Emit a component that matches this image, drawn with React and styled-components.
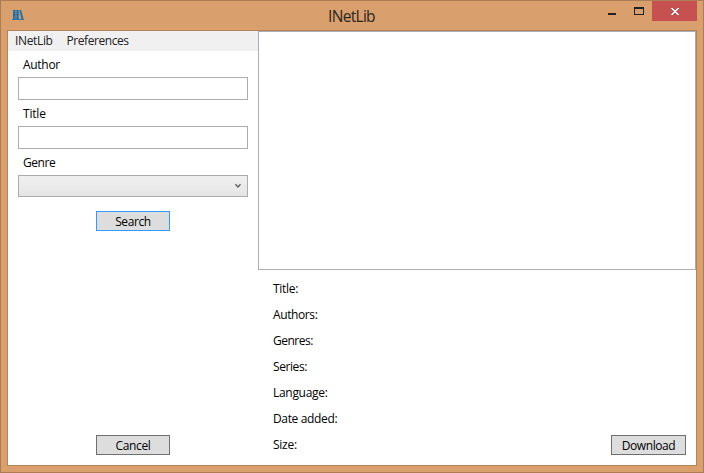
import React from "react";
import styled, { createGlobalStyle } from "styled-components";

const Global = createGlobalStyle`
  *, *::before, *::after { box-sizing: border-box; }
  body { margin: 0; overflow: hidden; }
  button, input { font: inherit; }
`;

const Window = styled.div`
  width: 704px;
  height: 473px;
  display: flex;
  flex-direction: column;
  padding: 0 6px 6px;
  border: 1px solid #ad7e56;
  background: #d99f6c;
  color: #000;
  font: 12px/16px "Open Sans", "Noto Sans", sans-serif;
`;

const TitleBar = styled.header`
  height: 29px;
  flex: none;
  display: grid;
  grid-template-columns: 97px 1fr 97px;
`;

const AppIcon = styled.svg`
  margin: 8px 0 0 5px;
`;

const Caption = styled.h1`
  margin: 0;
  padding: 5px 1px 0 0;
  text-align: center;
  font-size: 15.5px;
  font-weight: 400;
  line-height: 20px;
  letter-spacing: -0.7px;
  color: #2b2623;
`;

const WindowControls = styled.div`
  display: flex;
  justify-content: flex-end;
`;

const ControlButton = styled.button`
  width: ${(p) => p.$width}px;
  height: 20px;
  padding: 0;
  border: 0;
  background: ${(p) => (p.$close ? "#c75050" : "transparent")};
  svg { display: block; }
`;

const Client = styled.main`
  flex: 1;
  min-height: 0;
  display: grid;
  grid-template-columns: 250px 438px;
  grid-template-rows: minmax(0, 1fr);
  border: 1px solid #b68358;
  background: #fff;
`;

const SearchPane = styled.section`
  display: flex;
  flex-direction: column;
`;

const MenuBar = styled.nav`
  height: 20px;
  display: flex;
  gap: 14px;
  padding: 2px 7px 0;
  background: #f0f0f0;
  color: #212121;
`;

const Text = styled.span`
  white-space: nowrap;
  letter-spacing: ${(p) => p.$track ?? -0.45}px;
`;

const SearchForm = styled.div`
  flex: 1;
  display: flex;
  flex-direction: column;
  padding: 0 10px 10px;
`;

const Field = styled.label`
  display: flex;
  flex-direction: column;
  height: 49px;
`;

const FieldLabel = styled(Text)`
  height: 26px;
  padding: 6px 0 0 5px;
`;

const TextBox = styled.input`
  height: 23px;
  padding: 0 4px;
  border: 1px solid #abadb3;
  border-radius: 0;
  background: #fff;
  outline: 0;
`;

const ComboBox = styled.div`
  height: 22px;
  flex: none;
  display: flex;
  align-items: center;
  justify-content: flex-end;
  padding: 0 5px 1px 0;
  border: 1px solid #acacac;
  background: linear-gradient(#f0f0f0, #e5e5e5);
`;

const PushButton = styled.button`
  width: ${(p) => p.$width ?? 74}px;
  height: 20px;
  padding: 1px 0 0;
  border: 1px solid ${(p) => (p.$default ? "#3399ff" : "#707070")};
  background: #ddd;
  color: #000;
  line-height: 17px;
`;

const Actions = styled.div`
  flex: 1;
  display: flex;
  flex-direction: column;
  align-items: center;
  justify-content: space-between;
  padding: 14px 0 0;
`;

const BookPane = styled.section`
  display: flex;
  flex-direction: column;
`;

const BookList = styled.div`
  height: 239px;
  flex: none;
  border: 1px solid #abadb3;
`;

const Details = styled.div`
  flex: 1;
  min-height: 0;
  display: flex;
  justify-content: space-between;
  align-items: flex-end;
  padding: 0 10px 10px 15px;
`;

const DetailList = styled.div`
  align-self: flex-start;
  display: grid;
  grid-auto-rows: 26px;
  padding-top: 11px;
`;

const DETAILS = [
  ["Title:", -0.3],
  ["Authors:", -0.4],
  ["Genres:", -0.5],
  ["Series:", -0.42],
  ["Language:", -0.3],
  ["Date added:", -0.35],
  ["Size:", -0.25],
];

function Books() {
  return (
    <AppIcon width="13" height="12" viewBox="0 0 13 12">
      <path d="M1 1h2.7v9.5H1zM4.2 1h2.7v9.5H4.2z" fill="#1e6da8" />
      <path d="M7.3 1.2 9 .8l2.6 9.4-2 .3z" fill="#1e6da8" />
      <path d="M1 3h6M1 8h6" stroke="#5c8ba8" strokeWidth=".6" />
      <path d="M3.95 1v9M7.1 1v9" stroke="#6d8d99" strokeWidth=".5" />
      <path d="M0 10.5h12" stroke="#2f75a5" />
    </AppIcon>
  );
}

export default function App() {
  return (
    <>
      <Global />
      <Window>
        <TitleBar>
          <Books />
          <Caption>INetLib</Caption>
          <WindowControls>
            <ControlButton $width={26} aria-label="Minimize">
              <svg width="26" height="20"><path d="M8 12h8v2H8z" fill="#222" /></svg>
            </ControlButton>
            <ControlButton $width={26} aria-label="Maximize">
              <svg width="26" height="20"><path fillRule="evenodd" d="M8 6h10v8H8zM9 8v5h8V8z" fill="#222" /></svg>
            </ControlButton>
            <ControlButton $width={45} $close aria-label="Close">
              <svg width="45" height="20" shapeRendering="crispEdges">
                <path
                  d="M19 7h2v1h1v1h2V8h1V7h2v1h-1v1h-1v1h-1v1h1v1h1v1h1v1h-2v-1h-1v-1h-2v1h-1v1h-2v-1h1v-1h1v-1h1v-1h-1V9h-1V8h-1z"
                  fill="#fff"
                />
              </svg>
            </ControlButton>
          </WindowControls>
        </TitleBar>
        <Client>
          <SearchPane>
            <MenuBar>
              <Text $track={-0.35}>INetLib</Text>
              <Text>Preferences</Text>
            </MenuBar>
            <SearchForm>
              <Field>
                <FieldLabel $track={-0.3}>Author</FieldLabel>
                <TextBox />
              </Field>
              <Field>
                <FieldLabel $track={-0.2}>Title</FieldLabel>
                <TextBox />
              </Field>
              <FieldLabel>Genre</FieldLabel>
              <ComboBox>
                <svg width="8" height="6" viewBox="0 0 8 6">
                  <path d="M1.5 1.3 4 3.9l2.5-2.6" fill="none" stroke="#606060" strokeWidth="1.4" />
                </svg>
              </ComboBox>
              <Actions>
                <PushButton $default><Text $track={-0.4}>Search</Text></PushButton>
                <PushButton><Text $track={-0.35}>Cancel</Text></PushButton>
              </Actions>
            </SearchForm>
          </SearchPane>
          <BookPane>
            <BookList />
            <Details>
              <DetailList>
                {DETAILS.map(([label, track]) => (
                  <Text key={label} $track={track}>{label}</Text>
                ))}
              </DetailList>
              <PushButton $width={75}><Text $track={-0.4}>Download</Text></PushButton>
            </Details>
          </BookPane>
        </Client>
      </Window>
    </>
  );
}
